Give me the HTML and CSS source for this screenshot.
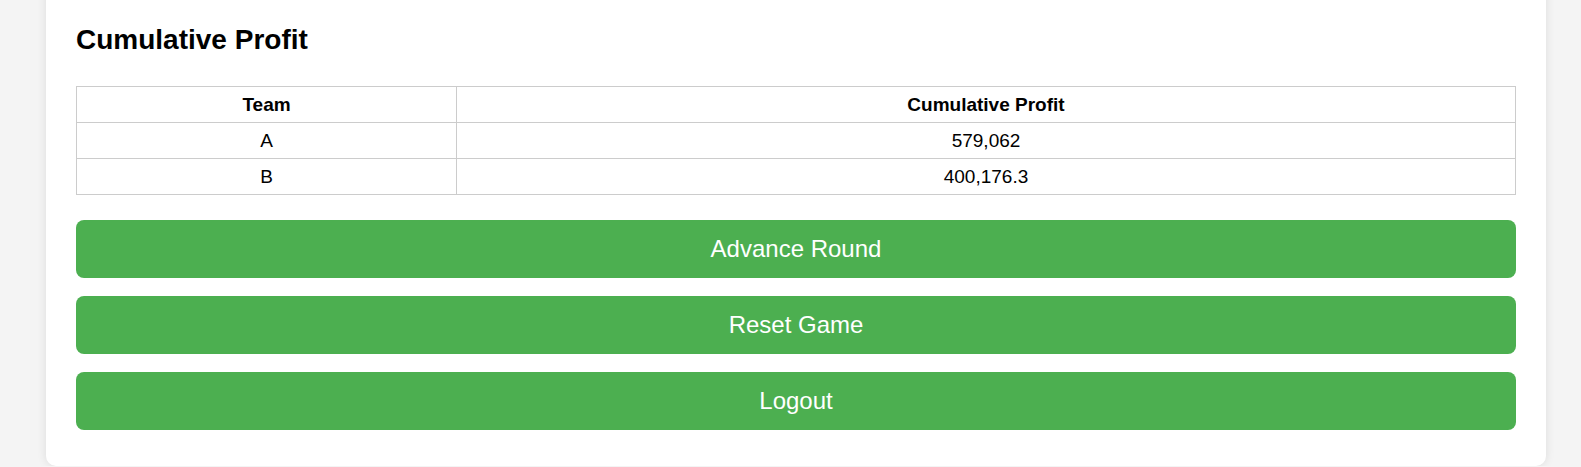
FILE: index.html
```html
<!DOCTYPE html>
<html lang="en">
<head>
<meta charset="utf-8">
<title>Cumulative Profit</title>
<link rel="stylesheet" href="styles.css">
</head>
<body>
  <main class="card">
    <h2 class="title">Cumulative Profit</h2>
    <table class="profit-table">
      <thead>
        <tr><th class="col-team">Team</th><th>Cumulative Profit</th></tr>
      </thead>
      <tbody>
        <tr><td>A</td><td>579,062</td></tr>
        <tr><td>B</td><td>400,176.3</td></tr>
      </tbody>
    </table>
    <div class="actions">
      <button class="btn" type="button">Advance Round</button>
      <button class="btn" type="button">Reset Game</button>
      <button class="btn" type="button">Logout</button>
    </div>
  </main>
</body>
</html>
```
FILE: styles.css
```css
html, body {
  margin: 0;
  padding: 0;
}
body {
  background: #f4f4f4;
  font-family: "Liberation Sans", Arial, sans-serif;
  color: #000;
  overflow: hidden;
}
.card {
  box-sizing: border-box;
  width: 1500px;
  margin: -30px 0 0 46px;
  padding: 30px 30px 36px;
  background: #fff;
  border-radius: 10px;
  box-shadow: 0 0 10px rgba(0, 0, 0, 0.1);
}
.title {
  font-size: 28px;
  font-weight: bold;
  line-height: 31px;
  margin: 24px 0 31px;
}
.profit-table {
  width: 100%;
  border-collapse: collapse;
  font-size: 19px;
}
.profit-table th,
.profit-table td {
  border: 1px solid #cccccc;
  padding: 7px 8px;
  line-height: 21px;
  text-align: center;
}
.profit-table th {
  font-weight: bold;
  font-size: 19px;
}
.col-team {
  width: 363px;
}
.actions {
  display: flex;
  flex-direction: column;
  gap: 18px;
  margin-top: 25px;
}
.btn {
  display: block;
  width: 100%;
  height: 58px;
  border: none;
  border-radius: 8px;
  background: #4caf50;
  color: #fff;
  font-family: "Liberation Sans", Arial, sans-serif;
  font-size: 24px;
  cursor: pointer;
}
```
